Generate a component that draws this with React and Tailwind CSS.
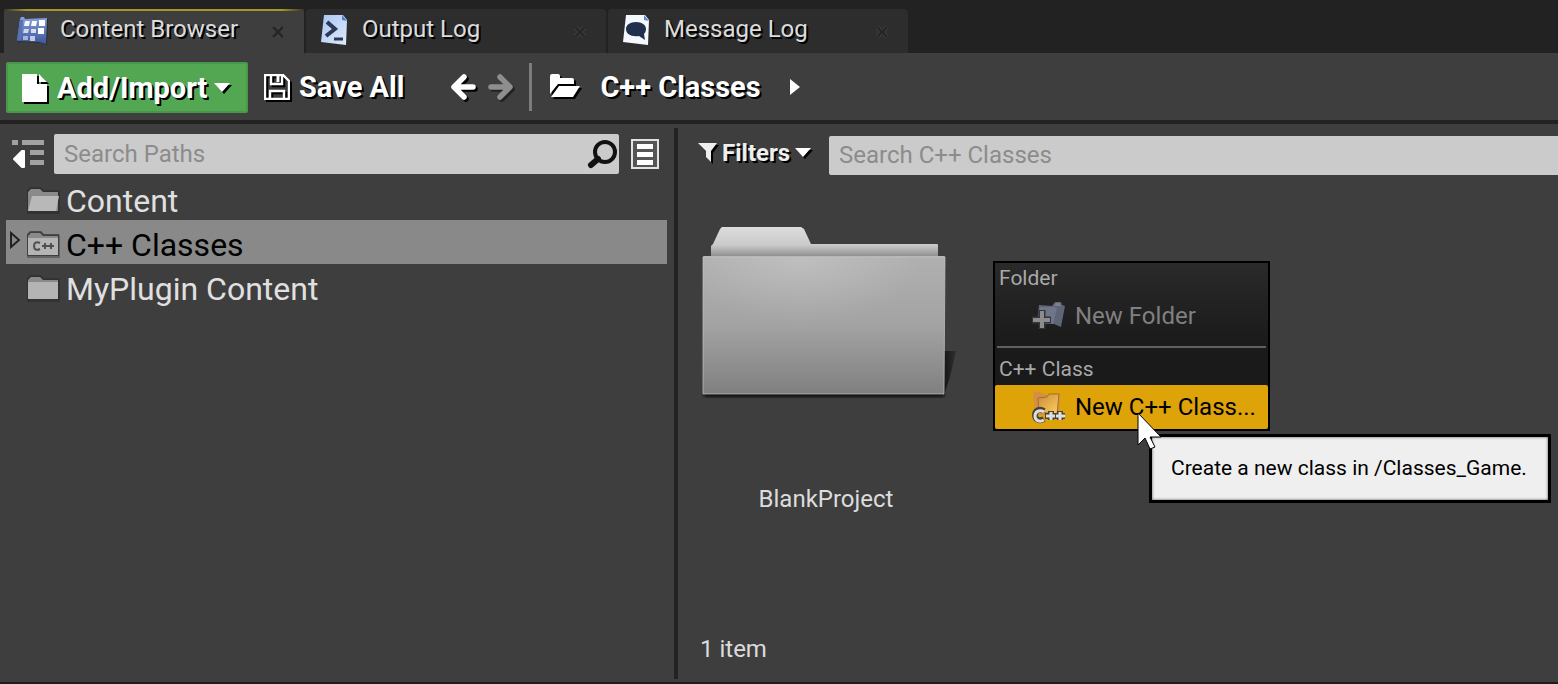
import clsx from "clsx";

const ContentIcon = () => (
  <svg width="32" height="30" viewBox="0 0 32 30" className="shrink-0">
    <defs>
      <linearGradient id="blue" x1="0" y1="0" x2="0" y2="1">
        <stop offset="0" stopColor="#86a0dc" />
        <stop offset="1" stopColor="#3d569c" />
      </linearGradient>
    </defs>
    <path d="M4 4l1-2h3l1 2 22-1-1 26-7-2-22-1z" fill="#1c1c1c" opacity=".5" transform="translate(1 1)" />
    <path d="M4 4l1-2h3l1 2 22-1-1 26-7-2-22-1z" fill="url(#blue)" />
    <path d="M4 5l3 0-2 20-4 0z" fill="#5871b8" />
    <g fill="#fff">
      <path d="M9 6h5l-1 5H8z" opacity=".9" />
      <path d="M16 6h5l-1 5h-5z" />
      <path d="M23 5h6v6h-6z" />
      <path d="M8 14h5l-1 4H7z" opacity=".7" />
      <path d="M15 14h5v4h-5z" opacity=".75" />
      <path d="M22 13h6v6h-6z" />
      <path d="M7 21h5v4H7z" opacity=".5" />
      <path d="M14 21h5v5h-5z" opacity=".65" />
    </g>
  </svg>
);

const OutputIcon = () => (
  <svg width="32" height="32" viewBox="0 0 32 32" className="shrink-0">
    <defs>
      <linearGradient id="page" x1="0" y1="0" x2="1" y2="1">
        <stop offset="0" stopColor="#a9c6f3" />
        <stop offset="1" stopColor="#dfeafc" />
      </linearGradient>
    </defs>
    <path d="M6 1h19l4 5-1 25-25-3z" fill="url(#page)" />
    <path d="M24 1l5 6-5-1z" fill="#4f7fd0" />
    <path d="M9 8l8 7-9 7" fill="none" stroke="#2c3854" strokeWidth="4" />
    <path d="M16 25h9" stroke="#2c3854" strokeWidth="3" />
  </svg>
);

const MessageIcon = () => (
  <svg width="32" height="32" viewBox="0 0 32 32" className="shrink-0">
    <path d="M6 1h19l4 5-1 25-25-3z" fill="#f5f8fc" />
    <path d="M24 1l5 6-5-1z" fill="#5b8bd8" />
    <path d="M16 8c6 0 10 3 10 7 0 2-1 4-2 5l1 6-6-4c-8 1-13-2-13-7 0-4 4-7 10-7z" fill="#20304c" />
  </svg>
);

const FolderIcon = ({ open, cpp }) => (
  <svg width="36" height="30" viewBox="0 0 36 30" className="shrink-0">
    <path d="M1 5l3-3h11l3 3h16v23H1z" fill="#1c1c1c" opacity=".35" />
    <path d="M1 4l3-3h11l3 3h15v22H1z" fill="#303030" opacity=".7" />
    <path d="M2 6l3-3h9l3 3h15v19H2z" fill="#8a8a8a" />
    {open ? <path d="M6 10h27l-3 15H2z" fill="#b8b8b8" /> : <path d="M2 8h30v17H2z" fill="#b4b4b4" />}
    {cpp && (
      <g fill="none" stroke="#4f4f4f" strokeWidth="2">
        <path d="M14 13c-4-2-6 0-6 3s2 5 6 3" />
        <path d="M16 16h6M19 13v6M22 16h6M25 13v6" />
      </g>
    )}
  </svg>
);

const BigFolder = () => (
  <svg width="248" height="176" viewBox="0 0 248 176" className="block overflow-visible">
    <defs>
      <linearGradient id="tab" x1="0" y1="0" x2="0" y2="1">
        <stop offset="0" stopColor="#dcdcdc" />
        <stop offset=".6" stopColor="#cacaca" />
        <stop offset="1" stopColor="#8c8c8c" />
      </linearGradient>
      <linearGradient id="front" x1="0" y1="0" x2="0" y2="1">
        <stop offset="0" stopColor="#b0b0b0" />
        <stop offset=".5" stopColor="#a3a3a3" />
        <stop offset="1" stopColor="#808080" />
      </linearGradient>
      <radialGradient id="shine" cx=".4" cy="0" r=".5">
        <stop offset="0" stopColor="#fff" stopOpacity=".2" />
        <stop offset="1" stopColor="#fff" stopOpacity="0" />
      </radialGradient>
      <linearGradient id="cast" x1="0" y1="0" x2="1" y2="0">
        <stop offset="0" stopColor="#151515" />
        <stop offset="1" stopColor="#303030" />
      </linearGradient>
      <filter id="soft">
        <feGaussianBlur stdDeviation="1.5" />
      </filter>
    </defs>
    <path d="M242 125h12l-6 26-6 18z" fill="url(#cast)" />
    <path d="M2 166h240v5H2z" fill="#0c0c0c" filter="url(#soft)" />
    <path d="M9 31V20l2-2 7-15 2-2h79l3 2 7 15h126q1 0 1 1v12z" fill="url(#tab)" />
    <path d="M1 31q0-1 1-1h240q1 0 1 1l-1 137H1z" fill="url(#front)" />
    <path d="M1 31h242v137H1z" fill="url(#shine)" />
    <path d="M1 31h242l-1 137H1z" fill="none" stroke="#c4c4c4" opacity=".7" />
  </svg>
);

const CaretDown = ({ className }) => (
  <svg width="18" height="12" viewBox="0 0 18 12" className={className}>
    <path d="M1 1h16L9 10z" fill="#fff" />
  </svg>
);

const Arrow = ({ className }) => (
  <svg width="28" height="28" viewBox="0 0 28 28" className={className}>
    <path
      d="M24 14H6M15 4L5 14l10 10"
      fill="none"
      stroke="currentColor"
      strokeWidth="5.5"
      strokeLinecap="round"
      strokeLinejoin="round"
    />
  </svg>
);

const tabs = [
  { name: "Content Browser", Icon: ContentIcon, active: true },
  { name: "Output Log", Icon: OutputIcon },
  { name: "Message Log", Icon: MessageIcon },
];

const paths = [
  { name: "Content", open: true },
  { name: "C++ Classes", cpp: true, selected: true },
  { name: "MyPlugin Content" },
];

const Tabs = () => (
  <div className="flex gap-0.5 bg-[#222] px-1 pt-[9px]">
    {tabs.map(({ name, Icon, active }) => (
      <div
        key={name}
        className={clsx(
          "flex h-11 w-[300px] items-center rounded-t-sm border-t-2 pr-[18px] pl-3",
          active
            ? "bg-[#3e3e3e] [border-image:linear-gradient(90deg,#2a2a2a,#a8952a_8%,#a8952a_92%,#2a2a2a)_2]"
            : "border-[#2d2d2d] bg-[#2d2d2d]"
        )}
      >
        <button className="flex flex-1 items-center gap-3 pb-1 text-[24px] leading-8 text-[#dcdcdc] [text-shadow:2px_2px_0_#000]">
          <Icon />
          <span className="pb-0.5">{name}</span>
        </button>
        <button aria-label={`Close ${name}`} className="p-0.5">
          <svg width="12" height="12" viewBox="0 0 12 12">
            <path d="M1 1l10 10M11 1L1 11" stroke="#505050" strokeWidth="4" />
            <path d="M1 1l10 10M11 1L1 11" stroke="#262626" strokeWidth="3" />
          </svg>
        </button>
      </div>
    ))}
  </div>
);

const Toolbar = () => (
  <div className="flex h-[71px] items-center border-b-4 border-[#222] px-1.5 text-[29px] leading-9 font-bold text-white">
    <button className="mt-0.5 flex h-[51px] w-[242px] items-center rounded-xs border-2 border-[#4a964a] bg-[#53a753] pl-3.5 [text-shadow:2px_2px_0_#000]">
      <svg width="28" height="32" viewBox="0 0 28 32" className="mr-[7px] shrink-0 drop-shadow-[2px_2px_0_#000]">
        <path d="M0 2h15v10h10v18H0z" fill="#fff" />
        <path d="M17 2l8 8h-8z" fill="#fff" />
      </svg>
      Add/Import
      <CaretDown className="ml-1.5 shrink-0 drop-shadow-[2px_2px_0_#000]" />
    </button>
    <button className="ml-4 flex items-center gap-[9px] [text-shadow:2px_2px_0_#000]">
      <svg width="26" height="26" viewBox="0 0 26 26" className="drop-shadow-[2px_2px_0_#000]">
        <path d="M1 1h18l6 6v18H1zM7 1v9h11V1M6 25v-8h14v8" fill="none" stroke="#fff" strokeWidth="2.4" />
        <path d="M14 2v6" stroke="#fff" strokeWidth="3" />
      </svg>
      Save All
    </button>
    <button aria-label="Back" className="ml-[45px]">
      <Arrow className="drop-shadow-[2px_2px_0_#000]" />
    </button>
    <button aria-label="Forward" className="ml-2.5 text-[#8e8e8e]">
      <Arrow className="rotate-180 drop-shadow-[-2px_-2px_0_#222]" />
    </button>
    <div className="ml-3.5 h-12 w-[3px] bg-[#7c7c7c]" />
    <button aria-label="Choose path" className="ml-[17px]">
      <svg width="33" height="28" viewBox="0 0 33 28" className="drop-shadow-[2px_2px_0_#000]">
        <path d="M1 3q0-2 2-2h6q2 0 2 2v2h12q2 0 2 2v4H9L1 21z" fill="#fff" />
        <path d="M10 13h21l-7 11H2z" fill="#fff" />
      </svg>
    </button>
    <button className="ml-[18px] [text-shadow:2px_2px_0_#000]">C++ Classes</button>
    <svg width="12" height="18" viewBox="0 0 12 18" className="ml-7">
      <path d="M1 1l10 8-10 8z" fill="#fff" />
    </svg>
  </div>
);

const SourcesPanel = () => (
  <div className="flex flex-col pt-2.5">
    <div className="flex h-10 items-center pr-[15px] pl-3">
      <button aria-label="Hide sources">
        <svg width="33" height="30" viewBox="0 0 33 30" className="mr-[9px]">
          <path d="M0 1h6v5H0zM10 1h22v5H10zM18 11h14v5H18zM18 21h14v5H18z" fill="#a2a2a2" />
          <path d="M2 20l8-8h2v16h-2z" fill="#fff" stroke="#fff" strokeWidth="2" strokeLinejoin="round" />
        </svg>
      </button>
      <div className="flex h-10 min-w-0 flex-1 items-center rounded-xs bg-[#cbcbcb]">
        <input
          type="text"
          aria-label="Search Paths"
          placeholder="Search Paths"
          className="min-w-0 flex-1 px-2.5 text-[24px] leading-8 text-black outline-none placeholder:text-[#8c8c8c]"
        />
        <svg width="33" height="34" viewBox="0 0 33 34" className="shrink-0">
          <circle cx="19" cy="15" r="10" fill="none" stroke="#111" strokeWidth="4" />
          <path d="M12 22l-7 6" stroke="#111" strokeWidth="6" strokeLinecap="round" />
        </svg>
      </div>
      <button aria-label="View options" className="ml-3">
        <svg width="28" height="30" viewBox="0 0 28 30">
          <path d="M1 1h26v28H1z" fill="#555" stroke="#e2e2e2" strokeWidth="2" />
          <path d="M6 5h16v5H6zM6 13h16v5H6zM6 21h16v5H6z" fill="#fff" />
        </svg>
      </button>
    </div>
    <ul className="mt-0.5 mr-[7px] ml-1.5">
      {paths.map(({ name, open, cpp, selected }) => (
        <li key={name}>
          <button
            className={clsx(
              "flex h-11 w-full items-center pt-1.5 text-[32px] leading-10",
              selected ? "bg-[#898989] text-black" : "text-[#e0e0e0]"
            )}
          >
            <span className="w-5 shrink-0 pb-2.5 pl-[3px]">
              {selected && (
                <svg width="13" height="18" viewBox="0 0 13 18">
                  <path d="M2 2v14l8-7z" fill="none" stroke="#222" strokeWidth="2" />
                </svg>
              )}
            </span>
            <FolderIcon open={open} cpp={cpp} />
            <span className="ml-1">{name}</span>
          </button>
        </li>
      ))}
    </ul>
  </div>
);

const AssetPanel = () => (
  <div className="flex min-w-0 flex-col">
    <div className="mt-[11px] flex h-10 items-center pl-5">
      <button className="flex w-[131px] items-center pb-1 text-[24px] leading-8 font-bold text-[#eee] [text-shadow:2px_2px_0_#000]">
        <svg width="20" height="22" viewBox="0 0 20 22" className="mr-1 drop-shadow-[2px_2px_0_#000]">
          <path d="M0 1h19l-6 8v11l-5-5V9z" fill="#eee" />
        </svg>
        Filters
        <CaretDown className="ml-1 drop-shadow-[2px_2px_0_#000]" />
      </button>
      <input
        type="text"
        aria-label="Search C++ Classes"
        placeholder="Search C++ Classes"
        className="h-[39px] min-w-0 flex-1 rounded-l-xs bg-[#cbcbcb] px-2.5 text-[24px] text-black outline-none placeholder:text-[#8c8c8c]"
      />
    </div>
    <div className="flex-1 pt-[51px] pl-6">
      <button className="flex w-62 flex-col items-center gap-[81px] text-[24px] leading-8 text-[#dcdcdc]">
        <BigFolder />
        BlankProject
      </button>
    </div>
    <p className="pb-[17px] pl-[22px] text-[24px] leading-8 text-[#dcdcdc]">1 item</p>
  </div>
);

const ContextMenu = () => (
  <div className="absolute top-[261px] left-[993px] w-[277px] border-2 border-black bg-linear-to-b from-[#2a2a2a] via-[#1a1a1a] to-[#1a1a1a] text-[24px]">
    <p className="px-1 text-[21px] leading-[31px] text-[#a8a8a8]">Folder</p>
    <button disabled className="flex h-11 w-full items-center pl-[37px] text-[#808080]">
      <svg width="34" height="30" viewBox="0 0 34 30" className="mr-[9px] shrink-0">
        <path d="M7 4l13 1 3-4h6l1 3 3 1-4 21-7-3-17-1z" fill="#5f6577" />
        <path d="M8 6h14l3 1-4 16H7z" fill="#70768a" />
        <path d="M22 5l2-3h4l1 3z" fill="#7b7f8c" />
        <path d="M10 9v19M0 19h19" stroke="#33353c" strokeWidth="7" />
        <path d="M10 10v17M1 19h17" stroke="#8c8c8c" strokeWidth="4" />
      </svg>
      New Folder
    </button>
    <hr className="mx-0.5 mt-2 border-t-2 border-[#606060]" />
    <p className="px-1 pt-1.5 text-[21px] leading-[31px] text-[#a8a8a8]">C++ Class</p>
    <button className="flex h-11 w-full items-center rounded-xs bg-[#dea309] pl-[37px] text-black">
      <svg width="34" height="34" viewBox="0 0 34 34" className="mr-[9px] shrink-0">
        <defs>
          <linearGradient id="gold" x1="0" y1="0" x2="1" y2="1">
            <stop offset="0" stopColor="#c88a3c" />
            <stop offset="1" stopColor="#ffd05e" />
          </linearGradient>
        </defs>
        <path d="M1 3l4-2 10 4 13-2-1 22H3z" fill="#d58f45" />
        <path d="M6 8l9-1 2-3h10l-2 20-18-2z" fill="url(#gold)" stroke="#a86f24" />
        <g fill="none" stroke="#4a4335" strokeWidth="6">
          <path d="M12 21c-5-3-9 0-9 4s4 7 9 4" />
          <path d="M13 26h20M19 21v9M28 21v9" />
        </g>
        <g fill="none" stroke="#dedede" strokeWidth="3">
          <path d="M12 22c-5-3-9 0-9 4s4 7 9 4" />
          <path d="M14 26h9M19 22v8M24 26h9M28 22v8" />
        </g>
      </svg>
      New C++ Class...
    </button>
  </div>
);

const App = () => {
  return (
    <div className="relative flex min-h-screen flex-col overflow-hidden border-b-2 border-[#1e1c1c] bg-[#3e3e3e] font-['Roboto',sans-serif]">
      <Tabs />
      <Toolbar />
      <div className="grid flex-1 grid-cols-[337fr_4px_440fr]">
        <SourcesPanel />
        <div className="mt-1 mb-[3px] bg-[#222]" />
        <AssetPanel />
      </div>

      <ContextMenu />
      <div
        role="tooltip"
        className="absolute top-[434px] left-[1149px] border-3 border-black bg-[#efefef] py-4 pr-[21px] pl-[19px] text-[21px] leading-[31px] whitespace-nowrap text-black shadow-[inset_0_0_3px_#555]"
      >
        Create a new class in /Classes_Game.
      </div>
      <svg width="28" height="42" viewBox="0 0 28 42" className="absolute top-[412px] left-[1137px]">
        <path d="M1 1v32l7-7 5 11 5-2-5-10h11z" fill="#fff" stroke="#000" />
      </svg>
    </div>
  );
};

export default App;
